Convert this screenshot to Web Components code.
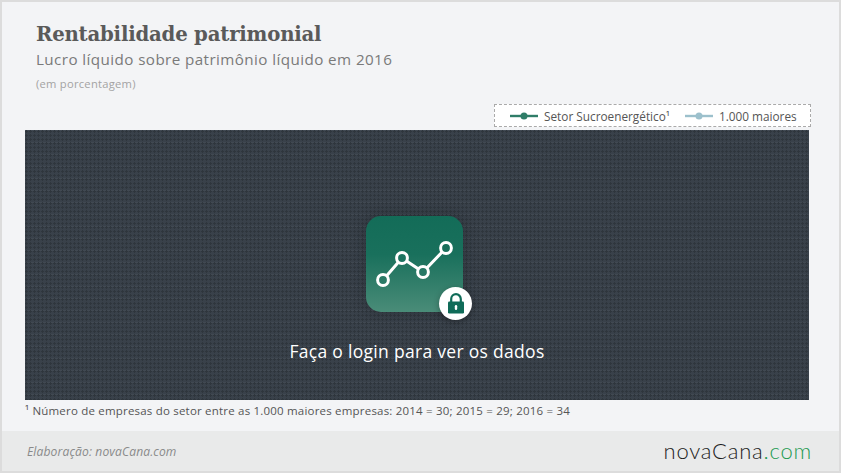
<!DOCTYPE html>
<html lang="pt">
<head>
<meta charset="utf-8">
<title>Rentabilidade patrimonial</title>
<style>
  html, body { margin: 0; padding: 0; }
  body { width: 841px; height: 473px; overflow: hidden; font-family: "Open Sans", Lato, sans-serif; }
</style>
</head>
<body>
<chart-card>
  <chart-header slot="header" heading="Rentabilidade patrimonial" sub="Lucro líquido sobre patrimônio líquido em 2016" unit="(em porcentagem)"></chart-header>
  <chart-legend slot="legend">
    <legend-item color="#2f7d68">Setor Sucroenergético¹</legend-item>
    <legend-item color="#9cc0cc">1.000 maiores</legend-item>
  </chart-legend>
  <locked-panel slot="panel">Faça o login para ver os dados</locked-panel>
  <span slot="note">¹ Número de empresas do setor entre as 1.000 maiores empresas: 2014 = 30; 2015 = 29; 2016 = 34</span>
  <chart-footer slot="footer">Elaboração: novaCana.com</chart-footer>
</chart-card>

<script>
class ChartCard extends HTMLElement {
  constructor() {
    super();
    this.attachShadow({ mode: 'open' });
    this.shadowRoot.innerHTML = `
      <style>
        :host{display:flex;flex-direction:column;box-sizing:border-box;width:841px;height:473px;background:#f3f4f6;border:2px solid #dcdcdc}
        .legend{display:flex;justify-content:flex-end;margin:9px 28px 0 0}
        .panel{display:block;margin:3px 30px 0 23px}
        .note{padding:3px 0 0 23px;height:31px;box-sizing:border-box;font-size:11.5px;line-height:16px;color:#555;letter-spacing:.2px;white-space:nowrap}
      </style>
      <slot name="header"></slot>
      <div class="legend"><slot name="legend"></slot></div>
      <div class="panel"><slot name="panel"></slot></div>
      <div class="note"><slot name="note"></slot></div>
      <slot name="footer"></slot>
    `;
  }
}

class ChartHeader extends HTMLElement {
  constructor() {
    super();
    this.attachShadow({ mode: 'open' });
  }

  connectedCallback() {
    this.shadowRoot.innerHTML = `
      <style>
        :host{display:block;padding:19px 0 0 34px;height:93px;box-sizing:border-box}
        h1{margin:0;font:700 19.7px/28px "DejaVu Serif",serif;color:#5a5a5a;letter-spacing:-.2px}
        h2{margin:0;font:400 15.2px/20px "Open Sans",sans-serif;color:#7a7a7a;letter-spacing:.42px;white-space:nowrap}
        p{margin:7px 0 0;font:400 11.2px/16px "Open Sans",sans-serif;color:#a3a3a3;letter-spacing:.25px}
      </style>
      <h1>${this.getAttribute('heading')}</h1>
      <h2>${this.getAttribute('sub')}</h2>
      <p>${this.getAttribute('unit')}</p>
    `;
  }
}

class ChartLegend extends HTMLElement {
  constructor() {
    super();
    this.attachShadow({ mode: 'open' });
    this.shadowRoot.innerHTML = `
      <style>
        :host{display:flex;align-items:center;gap:15px;box-sizing:border-box;height:23px;width:317px;padding:0 13px 0 15px;background:#fff;border:1px dashed #aaa}
      </style>
      <slot></slot>
    `;
  }
}

class LegendItem extends HTMLElement {
  constructor() {
    super();
    this.attachShadow({ mode: 'open' });
  }

  connectedCallback() {
    const c = this.getAttribute('color');
    this.shadowRoot.innerHTML = `
      <style>
        :host{display:flex;align-items:center;gap:6px;font-size:11.8px;color:#555;white-space:nowrap}
        svg{display:block}
      </style>
      <svg width="28" height="8" viewBox="0 0 28 8"><rect y="2.8" width="28" height="2.4" fill="${c}"/><circle cx="14" cy="4" r="3.5" fill="${c}"/></svg>
      <slot></slot>
    `;
  }
}

class LockedPanel extends HTMLElement {
  constructor() {
    super();
    this.attachShadow({ mode: 'open' });
    this.shadowRoot.innerHTML = `
      <style>
        :host{display:flex;flex-direction:column;align-items:center;box-sizing:border-box;height:270px;padding-top:86px;
          background-color:#39414a;
          background-image:radial-gradient(circle at 1.5px 1.5px,#2f363d 1px,transparent 1.3px),linear-gradient(#414952 1px,transparent 1px);
          background-size:4px 4px,4px 12px}
        .tile{position:relative;width:97px;height:96px;margin-left:-5px;border-radius:15px;background:linear-gradient(#136c58 0,#19705c 40%,#4a8c78 100%);box-shadow:0 0 14px rgba(20,25,30,.35)}
        .tile svg.chart{position:absolute;left:0;top:0}
        .lock{position:absolute;left:73px;top:71px;width:33px;height:33px;border-radius:50%;background:#fff;box-shadow:0 2px 6px rgba(0,0,0,.3);display:flex;align-items:center;justify-content:center}
        .label{margin-top:27px;font-size:17.5px;line-height:24px;color:#fff;letter-spacing:.3px;white-space:nowrap}
      </style>
      <div class="tile">
        <svg class="chart" width="97" height="96" viewBox="0 0 97 96" fill="none" stroke="#fff" stroke-width="3">
          <path d="M17 64 36 42 57 56 80 32"/>
          <circle cx="17" cy="64" r="5.4" fill="#2a7a66"/>
          <circle cx="36" cy="42" r="5.4" fill="#1c7360"/>
          <circle cx="57" cy="56" r="5.4" fill="#267865"/>
          <circle cx="80" cy="32" r="5.4" fill="#196f5b"/>
        </svg>
        <div class="lock">
          <svg width="16" height="21" viewBox="0 0 16 21">
            <path d="M3.2 9V6a4.8 4.8 0 0 1 9.6 0v3" fill="none" stroke="#0f6b58" stroke-width="2.2"/>
            <rect x="0" y="8.5" width="16" height="12" rx="1.2" fill="#0f6b58"/>
            <rect x="6.8" y="12" width="2.4" height="5" rx="1.2" fill="#fff"/>
          </svg>
        </div>
      </div>
      <div class="label"><slot></slot></div>
    `;
  }
}

class ChartFooter extends HTMLElement {
  constructor() {
    super();
    this.attachShadow({ mode: 'open' });
    this.shadowRoot.innerHTML = `
      <style>
        :host{display:flex;align-items:center;justify-content:space-between;box-sizing:border-box;height:40px;padding:0 27px 0 25px;background:#e9eaea}
        .src{font-style:italic;font-size:12.1px;color:#8a8a8a;letter-spacing:.12px}
        .logo{font:300 22px/24px Lato,sans-serif;letter-spacing:.8px;color:#1c1c1c}
        .logo b{font-weight:300;color:#1f9a52}
      </style>
      <span class="src"><slot></slot></span>
      <span class="logo">novaCana<b>.com</b></span>
    `;
  }
}

customElements.define('chart-card', ChartCard);
customElements.define('chart-header', ChartHeader);
customElements.define('chart-legend', ChartLegend);
customElements.define('legend-item', LegendItem);
customElements.define('locked-panel', LockedPanel);
customElements.define('chart-footer', ChartFooter);
</script>
</body>
</html>
